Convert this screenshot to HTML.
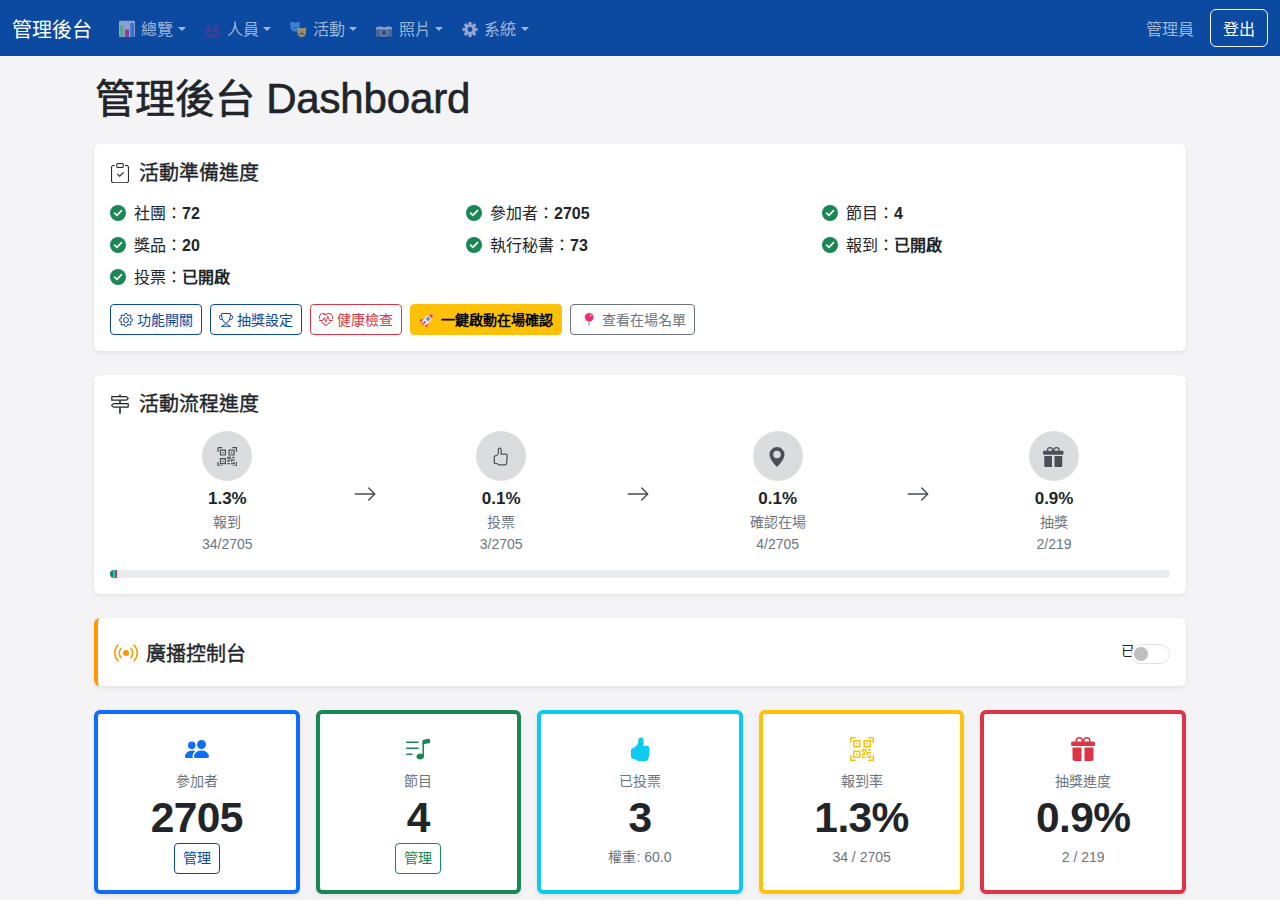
<!DOCTYPE html>
<html lang="zh-TW">
<head>
<meta charset="utf-8">
<title>管理後台 Dashboard</title>
<style>
*{box-sizing:border-box;margin:0;padding:0}
html,body{width:1280px;height:900px;overflow:hidden}
body{font-family:"Liberation Sans",sans-serif;font-size:16px;line-height:1.5;color:#212529;background:#f4f4f6;position:relative}
svg{display:block}
.abs{position:absolute}
/* navbar */
.nav{position:absolute;left:0;top:0;width:1280px;height:56px;background:#0b4aa0}
.brand{position:absolute;left:12px;top:14.5px;font-size:20px;line-height:30px;color:#fff;white-space:nowrap}
.ni{position:absolute;top:17.5px;height:24px;line-height:24px;color:rgba(255,255,255,.6);white-space:nowrap;font-size:16px}
.nt{position:absolute;top:17.5px;height:24px;line-height:24px;color:rgba(255,255,255,.6);white-space:nowrap;font-size:16px}
.caret{position:absolute;top:27px;width:0;height:0;border-top:4.5px solid rgba(255,255,255,.6);border-left:4.3px solid transparent;border-right:4.3px solid transparent}
.user{position:absolute;left:1146px;top:18px;line-height:24px;color:rgba(255,255,255,.6)}
.logout{position:absolute;left:1210px;top:9px;width:58px;height:38px;border:1px solid #f8f9fa;border-radius:6px;color:#fff;text-align:center;line-height:39px}
/* page */
h1{position:absolute;left:95px;top:74.5px;font-size:40px;line-height:48px;font-weight:500;white-space:nowrap;color:#212529;-webkit-text-stroke:0.6px #212529}
.card{position:absolute;left:94px;width:1092px;background:#fff;border-radius:6px;box-shadow:0 .125rem .25rem rgba(0,0,0,.075)}
.ttl{position:absolute;font-size:20px;line-height:27px;font-weight:500;white-space:nowrap;-webkit-text-stroke:0.35px #212529}
.chk{position:absolute;font-size:16px;line-height:24px;white-space:nowrap}
.chk b{font-weight:700}
.chk svg{position:absolute;left:0;top:4px}
.chk span{position:absolute;left:24px;top:0.8px}
.btn{position:absolute;top:160px;height:31px;border:1px solid;border-radius:4px;font-size:14px;line-height:31px;white-space:nowrap;padding:0 8px}
.btn svg{display:inline-block;vertical-align:-2px;margin-right:4px}
.rk{display:inline-block;width:17px;font-size:12.5px;text-align:left;margin-left:2px}

.step{position:absolute;top:56px;height:130px;text-align:center}
.circ{position:absolute;left:calc(50% - 25px);top:0;width:50px;height:50px;border-radius:50%;background:#dadcde}
.circ svg{position:absolute}
.pct{position:absolute;left:0;width:100%;top:55px;font-size:17px;line-height:26px;font-weight:700;color:#212529}
.lbl{position:absolute;left:0;width:100%;top:81px;font-size:14px;line-height:21px;color:#6c757d}
.cnt{position:absolute;left:0;width:100%;top:102.5px;font-size:14px;line-height:21px;color:#6c757d}
.arr{position:absolute;top:107px}
.prog{position:absolute;left:16px;top:195px;width:1060px;height:8px;border-radius:4px;background:#e9ecef;overflow:hidden}
.prog div{position:absolute;top:0;height:8px}

.sc{position:absolute;top:710px;width:205.6px;height:183.5px;background:#fff;border:4px solid;border-radius:6px;text-align:center;box-shadow:0 .125rem .25rem rgba(0,0,0,.075)}
.sc svg{position:absolute;left:86.8px;top:23px}
.sl{position:absolute;left:0;width:197.6px;top:57px;font-size:14px;line-height:21px;color:#6c757d}
.sn{position:absolute;left:0;width:197.6px;top:80px;font-size:42.5px;line-height:48px;font-weight:700;letter-spacing:-0.6px;color:#212529}
.sb{position:absolute;left:75.8px;top:129px;width:46px;height:31px;border:1px solid;border-radius:4px;font-size:14px;line-height:29px}
.ss{position:absolute;left:0;width:197.6px;top:133px;font-size:14px;line-height:21px;color:#6c757d}
.sw{position:absolute;left:1033px;top:26px;width:39px;height:19.5px;border:1px solid #dee2e6;border-radius:10px;background:#fff}
.sw i{position:absolute;left:2px;top:2px;width:13.5px;height:13.5px;border-radius:50%;background:#bfbfbf}
</style>
</head>
<body>
<div class="nav">
  <div class="brand">管理後台</div>
  <svg class="abs" style="left:119px;top:20px" width="16" height="17" viewBox="0 0 16 17"><rect x="0" y="0.8" width="16" height="16.2" rx="1.2" fill="#8ca0cf"/><rect x="1" y="5" width="3.8" height="12" rx="1.2" fill="#5fa690"/><rect x="6" y="9.6" width="4" height="7.4" rx="1.2" fill="#8a3f92"/><rect x="11.3" y="3" width="3.8" height="14" rx="1.2" fill="#2f78c8"/></svg>
  <div class="nt" style="left:141px">總覽</div><i class="caret" style="left:178px"></i>
  <svg class="abs" style="left:205px;top:25px" width="16" height="13" viewBox="0 0 16 13"><g fill="#3a3f98"><ellipse cx="3.7" cy="4" rx="3" ry="3.8"/><ellipse cx="11.3" cy="4" rx="3" ry="3.8"/><path d="M0 12.5V10.2C0 8.8 1.4 8 3.7 8s3.7.8 3.7 2.2v2.3zM7.6 12.5V10.2C7.6 8.8 9 8 11.3 8s3.7.8 3.7 2.2v2.3z"/></g></svg>
  <div class="nt" style="left:227px">人員</div><i class="caret" style="left:263px"></i>
  <svg class="abs" style="left:290px;top:21px" width="17" height="17" viewBox="0 0 17 17"><path d="M0.2 0.8Q5 2.2 9.8 0.8L9.5 6.5Q9 10.2 5 10.8Q1 10.2 0.5 6.5z" fill="#3a82d4"/><path d="M7.3 6.5Q12 8 16.2 6.2L15.9 12Q15.4 15.7 11.7 16.2Q7.8 15.7 7.5 12z" fill="#9a8f6a"/><path d="M9.6 13.2q2.1-1.6 4.2 0" stroke="#1e4f9a" stroke-width="1.1" fill="none"/><path d="M2.4 6q2.6 2 5.2 0" stroke="#1e5fb0" stroke-width="1.1" fill="none"/></svg>
  <div class="nt" style="left:313px">活動</div><i class="caret" style="left:349px"></i>
  <svg class="abs" style="left:376px;top:26px" width="16" height="11" viewBox="0 0 16 11"><rect x="0" y="1.2" width="16" height="9.6" fill="#4b6596"/><rect x="0" y="1.2" width="16" height="2" fill="#8ea4d2"/><rect x="3" y="0" width="2.4" height="1.4" fill="#6f88bd"/><rect x="11" y="0" width="2.4" height="1.4" fill="#6f88bd"/><circle cx="8" cy="6.4" r="3.4" fill="#34508f" stroke="#7d95c8" stroke-width="1.1"/></svg>
  <div class="nt" style="left:399px">照片</div><i class="caret" style="left:435px"></i>
  <svg class="abs" style="left:461.5px;top:22px" width="16" height="15" viewBox="0 0 16 15"><g transform="translate(8 7.5)"><g fill="#97a4d6"><rect x="-1.6" y="-7.5" width="3.2" height="15"/><rect x="-1.6" y="-7.5" width="3.2" height="15" transform="rotate(45)"/><rect x="-1.6" y="-7.5" width="3.2" height="15" transform="rotate(90)"/><rect x="-1.6" y="-7.5" width="3.2" height="15" transform="rotate(135)"/><circle r="5.3"/></g><circle r="2.4" fill="#0b4aa0"/></g></svg>
  <div class="nt" style="left:484px">系統</div><i class="caret" style="left:521px"></i>
  <div class="user">管理員</div>
  <div class="logout">登出</div>
</div>

<h1>管理後台 <span style="font-size:42px;letter-spacing:-0.15px">Dashboard</span></h1>

<!-- card 1 -->
<div class="card" style="top:144px;height:207px">

  <svg class="abs" style="left:17px;top:19px" width="18" height="20" viewBox="0 0 18 20"><path d="M3.8 2.55H2.2A1.6 1.6 0 0 0 .55 4.2V18A1.6 1.6 0 0 0 2.2 19.65H15.8A1.6 1.6 0 0 0 17.45 18V4.2A1.6 1.6 0 0 0 15.8 2.55H14" fill="none" stroke="#212529" stroke-width="1.05"/><rect x="5.8" y="0.5" width="6.4" height="3.9" rx="1" fill="none" stroke="#212529" stroke-width="1.05"/><path d="M6.2 10.9l2.5 2.3 4-3.9" fill="none" stroke="#212529" stroke-width="1.1"/></svg>
  <div class="ttl" style="left:45px;top:16px">活動準備進度</div>
<div class="chk" style="left:16px;top:57px"><svg width="16" height="16" viewBox="0 0 16 16"><circle cx="8" cy="8" r="8" fill="#198754"/><path d="M4.6 8.2l2.3 2.2 4.6-4.7" fill="none" stroke="#fff" stroke-width="1.7" stroke-linecap="round" stroke-linejoin="round"/></svg><span>社團：<b>72</b></span></div>
<div class="chk" style="left:372px;top:57px"><svg width="16" height="16" viewBox="0 0 16 16"><circle cx="8" cy="8" r="8" fill="#198754"/><path d="M4.6 8.2l2.3 2.2 4.6-4.7" fill="none" stroke="#fff" stroke-width="1.7" stroke-linecap="round" stroke-linejoin="round"/></svg><span>參加者：<b>2705</b></span></div>
<div class="chk" style="left:728px;top:57px"><svg width="16" height="16" viewBox="0 0 16 16"><circle cx="8" cy="8" r="8" fill="#198754"/><path d="M4.6 8.2l2.3 2.2 4.6-4.7" fill="none" stroke="#fff" stroke-width="1.7" stroke-linecap="round" stroke-linejoin="round"/></svg><span>節目：<b>4</b></span></div>
<div class="chk" style="left:16px;top:89px"><svg width="16" height="16" viewBox="0 0 16 16"><circle cx="8" cy="8" r="8" fill="#198754"/><path d="M4.6 8.2l2.3 2.2 4.6-4.7" fill="none" stroke="#fff" stroke-width="1.7" stroke-linecap="round" stroke-linejoin="round"/></svg><span>獎品：<b>20</b></span></div>
<div class="chk" style="left:372px;top:89px"><svg width="16" height="16" viewBox="0 0 16 16"><circle cx="8" cy="8" r="8" fill="#198754"/><path d="M4.6 8.2l2.3 2.2 4.6-4.7" fill="none" stroke="#fff" stroke-width="1.7" stroke-linecap="round" stroke-linejoin="round"/></svg><span>執行秘書：<b>73</b></span></div>
<div class="chk" style="left:728px;top:89px"><svg width="16" height="16" viewBox="0 0 16 16"><circle cx="8" cy="8" r="8" fill="#198754"/><path d="M4.6 8.2l2.3 2.2 4.6-4.7" fill="none" stroke="#fff" stroke-width="1.7" stroke-linecap="round" stroke-linejoin="round"/></svg><span>報到：<b>已開啟</b></span></div>
<div class="chk" style="left:16px;top:121px"><svg width="16" height="16" viewBox="0 0 16 16"><circle cx="8" cy="8" r="8" fill="#198754"/><path d="M4.6 8.2l2.3 2.2 4.6-4.7" fill="none" stroke="#fff" stroke-width="1.7" stroke-linecap="round" stroke-linejoin="round"/></svg><span>投票：<b>已開啟</b></span></div>
  <div class="btn" style="left:16px;color:#0d47a1;border-color:#0d47a1"><svg width="14" height="14" viewBox="0 0 16 16"><path d="M8 4.754a3.246 3.246 0 1 0 0 6.492 3.246 3.246 0 0 0 0-6.492M5.754 8a2.246 2.246 0 1 1 4.492 0 2.246 2.246 0 0 1-4.492 0" fill="currentColor"/><path d="M9.796 1.343c-.527-1.79-3.065-1.79-3.592 0l-.094.319a.873.873 0 0 1-1.255.52l-.292-.16c-1.64-.892-3.433.902-2.54 2.541l.159.292a.873.873 0 0 1-.52 1.255l-.319.094c-1.79.527-1.79 3.065 0 3.592l.319.094a.873.873 0 0 1 .52 1.255l-.16.292c-.892 1.64.901 3.434 2.541 2.54l.292-.159a.873.873 0 0 1 1.255.52l.094.319c.527 1.79 3.065 1.79 3.592 0l.094-.319a.873.873 0 0 1 1.255-.52l.292.16c1.64.893 3.434-.902 2.54-2.541l-.159-.292a.873.873 0 0 1 .52-1.255l.319-.094c1.79-.527 1.79-3.065 0-3.592l-.319-.094a.873.873 0 0 1-.52-1.255l.16-.292c.893-1.64-.902-3.433-2.541-2.54l-.292.159a.873.873 0 0 1-1.255-.52zm-2.633.283c.246-.835 1.428-.835 1.674 0l.094.319a1.873 1.873 0 0 0 2.693 1.115l.291-.16c.764-.415 1.6.42 1.184 1.185l-.159.292a1.873 1.873 0 0 0 1.116 2.692l.318.094c.835.246.835 1.428 0 1.674l-.319.094a1.873 1.873 0 0 0-1.115 2.693l.16.291c.415.764-.42 1.6-1.185 1.184l-.291-.159a1.873 1.873 0 0 0-2.693 1.116l-.094.318c-.246.835-1.428.835-1.674 0l-.094-.319a1.873 1.873 0 0 0-2.692-1.115l-.292.16c-.764.415-1.6-.42-1.184-1.185l.159-.291A1.873 1.873 0 0 0 1.945 8.93l-.319-.094c-.835-.246-.835-1.428 0-1.674l.319-.094A1.873 1.873 0 0 0 3.06 4.377l-.16-.292c-.415-.764.42-1.6 1.185-1.184l.292.159a1.873 1.873 0 0 0 2.692-1.115z" fill="currentColor"/></svg>功能開關</div>
  <div class="btn" style="left:116px;color:#0d47a1;border-color:#0d47a1"><svg width="14" height="14" viewBox="0 0 16 16"><path d="M2.5.5A.5.5 0 0 1 3 0h10a.5.5 0 0 1 .5.5q0 .807-.034 1.536a3 3 0 1 1-1.133 5.89c-.79 1.865-1.878 2.777-2.833 3.011v2.173l1.425.356c.194.048.377.135.537.255L13.3 15.1a.5.5 0 0 1-.3.9H3a.5.5 0 0 1-.3-.9l1.838-1.379c.16-.12.343-.207.537-.255L6.5 13.11v-2.173c-.955-.234-2.043-1.146-2.833-3.012a3 3 0 1 1-1.132-5.89A33 33 0 0 1 2.5.5m.099 2.54a2 2 0 0 0 .72 3.935c-.333-1.05-.588-2.346-.72-3.935m10.083 3.935a2 2 0 0 0 .72-3.935c-.133 1.59-.388 2.885-.72 3.935M3.504 1q.01.775.056 1.469c.13 2.028.457 3.546.87 4.667C5.294 9.48 6.484 10 7 10a.5.5 0 0 1 .5.5v2.61a1 1 0 0 1-.757.97l-1.426.356a.5.5 0 0 0-.179.085L4.5 15h7l-.638-.479a.5.5 0 0 0-.18-.085l-1.425-.356a1 1 0 0 1-.757-.97V10.5A.5.5 0 0 1 9 10c.516 0 1.706-.52 2.57-2.864.413-1.12.74-2.64.87-4.667q.045-.694.056-1.469z" fill="currentColor"/></svg>抽獎設定</div>
  <div class="btn" style="left:216px;color:#dc3545;border-color:#dc3545"><svg width="14" height="14" viewBox="0 0 16 16"><path fill-rule="evenodd" d="M8 2.748-.717-.737C5.6.281 2.514.878 1.4 3.053.918 3.995.78 5.323 1.508 7H.43c-2.128-5.697 4.165-8.83 7.394-5.857q.09.083.176.171a3 3 0 0 1 .176-.17c3.23-2.974 9.522.159 7.394 5.856h-1.078c.728-1.677.59-3.005.108-3.947C13.486.878 10.4.28 8.717 2.01zM2.212 10h1.315C4.593 11.183 6.05 12.458 8 13.795c1.949-1.337 3.407-2.612 4.473-3.795h1.315c-1.265 1.566-3.01 3.12-5.788 4.928C5.222 13.12 3.477 11.566 2.212 10" fill="currentColor"/><path d="M10.464 3.314a.5.5 0 0 0-.945.049L7.921 8.956 6.464 5.314a.5.5 0 0 0-.88-.091L3.732 8H.5a.5.5 0 0 0 0 1H4a.5.5 0 0 0 .416-.223l1.473-2.209 1.647 4.118a.5.5 0 0 0 .945-.049l1.598-5.593 1.457 3.642A.5.5 0 0 0 12 9h3.5a.5.5 0 0 0 0-1h-3.162z" fill="currentColor"/></svg>健康檢查</div>
  <div class="btn" style="left:316px;width:152px;background:#ffc107;border-color:#ffc107;color:#000;font-weight:700;padding-left:30px"><svg class="abs" style="left:7px;top:5.5px" width="18" height="18" viewBox="0 0 18 18"><g transform="rotate(45 9 9)"><path d="M7.6 14.5h2.8l-1.4 3.3z" fill="#f39a45"/><path d="M6.2 10.2L3.8 13.6 4.2 14.6h3zM11.8 10.2l2.4 3.4-.4 1h-3z" fill="#e8336b"/><path d="M9 1.2C11 2.8 12 5.6 12 8.6v5.4H6V8.6C6 5.6 7 2.8 9 1.2z" fill="#ede4f2"/><path d="M9 1.2C10.2 2.1 11 3.3 11.4 4.4H6.6C7 3.3 7.8 2.1 9 1.2z" fill="#e8335a"/><circle cx="9" cy="7.4" r="1.6" fill="#4aa3f0" stroke="#6b5fa8" stroke-width="0.6"/><rect x="8.2" y="11" width="1.6" height="3.6" fill="#e8336b"/></g></svg>一鍵啟動在場確認</div>
  <div class="btn" style="left:476px;width:125px;color:#6c757d;border-color:#6c757d;padding-left:31px"><svg class="abs" style="left:11px;top:5.5px" width="15" height="16" viewBox="0 0 15 16"><rect x="6.3" y="8.5" width="1.6" height="6.5" fill="#b9b3c9"/><circle cx="7.2" cy="6.3" r="4.3" fill="#ee2d6b"/><circle cx="8.6" cy="4.6" r="1" fill="#f7a1bf"/></svg>查看在場名單</div>
</div>

<!-- card 2 -->
<div class="card" style="top:375px;height:219px">

  <svg class="abs" style="left:16px;top:19px" width="20" height="20" viewBox="0 0 20 20"><path d="M10 0.5V2.4M10 6.4V9.4M10 13.3V19.7" stroke="#212529" stroke-width="1.6"/><path d="M1.8 2.6H16.4L18.3 4.4 16.4 6.2H1.8Z" fill="none" stroke="#212529" stroke-width="1.2" stroke-linejoin="round"/><path d="M18.2 9.6H3.5L1.5 11.35 3.5 13.1H18.2Z" fill="none" stroke="#212529" stroke-width="1.2" stroke-linejoin="round"/></svg>
  <div class="ttl" style="left:45px;top:16px">活動流程進度</div>
  <div class="step" style="left:16px;width:234.7px"><div class="circ"><svg style="left:14.2px;top:15.8px" width="20.5" height="19.7" viewBox="0 0 16 16"><path fill="#495057" d="M0 .5A.5.5 0 0 1 .5 0h3a.5.5 0 0 1 0 1H1v2.5a.5.5 0 0 1-1 0zm12 0a.5.5 0 0 1 .5-.5h3a.5.5 0 0 1 .5.5v3a.5.5 0 0 1-1 0V1h-2.5a.5.5 0 0 1-.5-.5M.5 12a.5.5 0 0 1 .5.5V15h2.5a.5.5 0 0 1 0 1h-3a.5.5 0 0 1-.5-.5v-3a.5.5 0 0 1 .5-.5m15 0a.5.5 0 0 1 .5.5v3a.5.5 0 0 1-.5.5h-3a.5.5 0 0 1 0-1H15v-2.5a.5.5 0 0 1 .5-.5M4 4h1v1H4z"/><path fill="#495057" d="M7 2H2v5h5zM3 3h3v3H3zm2 8H4v1h1z"/><path fill="#495057" d="M7 9H2v5h5zm-4 1h3v3H3zm8-6h1v1h-1z"/><path fill="#495057" d="M9 2h5v5H9zm1 1v3h3V3zM8 8v2h1v1H8v1h2v-2h1v2h1v-1h2v-1h-3V8zm2 2H9V9h1zm4 2h-1v1h-2v1h3zm-4 2v-1H8v1z"/><path fill="#495057" d="M12 9h2V8h-2z"/></svg></div><div class="pct">1.3%</div><div class="lbl">報到</div><div class="cnt">34/2705</div></div>
  <div class="arr" style="left:258.7px"><svg width="24" height="24" viewBox="0 0 16 16"><path fill="#495057" fill-rule="evenodd" d="M1 8a.5.5 0 0 1 .5-.5h11.793l-3.147-3.146a.5.5 0 0 1 .708-.708l4 4a.5.5 0 0 1 0 .708l-4 4a.5.5 0 0 1-.708-.708L13.293 8.5H1.5A.5.5 0 0 1 1 8"/></svg></div>
  <div class="step" style="left:290.7px;width:233.1px"><div class="circ"><svg style="left:17px;top:16px" width="16" height="20" viewBox="0 0 16 20"><path d="M6.2 1.3c.9-.5 1.9.2 1.9 1.2v4.6h4.6c.9 0 1.6.8 1.5 1.7l-.6 7.6c-.1.9-.8 1.5-1.7 1.5H6.6c-.8 0-1.3-.3-1.9-.8l-.7-.6H2.2c-.5 0-.9-.4-.9-.9V9.7c0-.5.4-.9.9-.9 1.6 0 3.2-1.4 3.2-3.5V2.4c0-.5.3-.9.8-1.1z" fill="none" stroke="#495057" stroke-width="1.2"/></svg></div><div class="pct">0.1%</div><div class="lbl">投票</div><div class="cnt">3/2705</div></div>
  <div class="arr" style="left:531.8px"><svg width="24" height="24" viewBox="0 0 16 16"><path fill="#495057" fill-rule="evenodd" d="M1 8a.5.5 0 0 1 .5-.5h11.793l-3.147-3.146a.5.5 0 0 1 .708-.708l4 4a.5.5 0 0 1 0 .708l-4 4a.5.5 0 0 1-.708-.708L13.293 8.5H1.5A.5.5 0 0 1 1 8"/></svg></div>
  <div class="step" style="left:563.8px;width:239.7px"><div class="circ"><svg style="left:14.7px;top:16px" width="20" height="20" viewBox="0 0 16 16"><path fill="#495057" d="M8 16s6-5.686 6-10A6 6 0 0 0 2 6c0 4.314 6 10 6 10m0-7a3 3 0 1 1 0-6 3 3 0 0 1 0 6"/></svg></div><div class="pct">0.1%</div><div class="lbl">確認在場</div><div class="cnt">4/2705</div></div>
  <div class="arr" style="left:811.5px"><svg width="24" height="24" viewBox="0 0 16 16"><path fill="#495057" fill-rule="evenodd" d="M1 8a.5.5 0 0 1 .5-.5h11.793l-3.147-3.146a.5.5 0 0 1 .708-.708l4 4a.5.5 0 0 1 0 .708l-4 4a.5.5 0 0 1-.708-.708L13.293 8.5H1.5A.5.5 0 0 1 1 8"/></svg></div>
  <div class="step" style="left:843.5px;width:233.1px"><div class="circ"><svg style="left:14.2px;top:15.8px" width="20.5" height="20.5" viewBox="0 0 16 16"><path fill="#495057" d="M3 2.5a2.5 2.5 0 0 1 5 0 2.5 2.5 0 0 1 5 0v.006c0 .07 0 .27-.038.494H15a1 1 0 0 1 1 1v1a1 1 0 0 1-1 1H1a1 1 0 0 1-1-1V4a1 1 0 0 1 1-1h2.038A3 3 0 0 1 3 2.506zm1.068.5H7v-.5a1.5 1.5 0 1 0-3 0c0 .085.002.274.045.43zM9 3h2.932l.023-.07c.043-.156.045-.345.045-.43a1.5 1.5 0 0 0-3 0zm6 4v7.5a1.5 1.5 0 0 1-1.5 1.5H9V7zM2.5 16A1.5 1.5 0 0 1 1 14.5V7h6v9z"/></svg></div><div class="pct">0.9%</div><div class="lbl">抽獎</div><div class="cnt">2/219</div></div>
  <div class="prog"><div style="left:0;width:3.3px;background:#198754"></div><div style="left:3.3px;width:1.3px;background:#0dcaf0"></div><div style="left:4.6px;width:2.3px;background:#dc3545"></div></div>
</div>

<!-- card 3 -->
<div class="card" style="top:618px;height:68px;border-left:4px solid #ff9800">

  <svg class="abs" style="left:16px;top:23px" width="24" height="24" viewBox="0 0 16 16"><path fill="#ff9800" d="M3.05 3.05a7 7 0 0 0 0 9.9.5.5 0 0 1-.707.707 8 8 0 0 1 0-11.314.5.5 0 0 1 .707.707m2.122 2.122a4 4 0 0 0 0 5.656.5.5 0 1 1-.708.708 5 5 0 0 1 0-7.072.5.5 0 0 1 .708.708m5.656-.708a.5.5 0 0 1 .708 0 5 5 0 0 1 0 7.072.5.5 0 1 1-.708-.708 4 4 0 0 0 0-5.656.5.5 0 0 1 0-.708m2.122-2.12a.5.5 0 0 1 .707 0 8 8 0 0 1 0 11.313.5.5 0 0 1-.707-.707 7 7 0 0 0 0-9.9.5.5 0 0 1 0-.707zM10 8a2 2 0 1 1-4 0 2 2 0 0 1 4 0"/></svg>
  <div class="ttl" style="left:48px;top:22.5px">廣播控制台</div>
  <div class="abs" style="left:1023px;top:23px;font-size:14px;line-height:21px;color:#212529">已</div>
  <div class="sw"><i></i></div>
</div>

<!-- stats -->
<div class="sc" style="left:94px;border-color:#0d6efd"><svg width="24" height="24" viewBox="0 0 16 16"><path fill="#0d6efd" d="M7 14s-1 0-1-1 1-4 5-4 5 3 5 4-1 1-1 1zm4-6a3 3 0 1 0 0-6 3 3 0 0 0 0 6m-5.784 6A2.24 2.24 0 0 1 5 13c0-1.355.68-2.75 1.936-3.72A6.3 6.3 0 0 0 5 9c-4 0-5 3-5 4s1 1 1 1zM4.5 8a2.5 2.5 0 1 0 0-5 2.5 2.5 0 0 0 0 5"/></svg><div class="sl">參加者</div><div class="sn">2705</div><div class="sb" style="color:#0d47a1;border-color:#0d47a1">管理</div></div>
<div class="sc" style="left:315.6px;border-color:#198754"><svg width="24" height="24" viewBox="0 0 16 16"><g fill="#198754"><path d="M12 13c0 1.105-1.12 2-2.5 2S7 14.105 7 13s1.12-2 2.5-2 2.5.895 2.5 2"/><path fill-rule="evenodd" d="M12 3v10h-1V3z"/><path d="M11 2.82a1 1 0 0 1 .804-.98l3-.6A1 1 0 0 1 16 2.22V4l-5 1z"/><path fill-rule="evenodd" d="M0 11.5a.5.5 0 0 1 .5-.5H4a.5.5 0 0 1 0 1H.5a.5.5 0 0 1-.5-.5m0-4A.5.5 0 0 1 .5 7H8a.5.5 0 0 1 0 1H.5a.5.5 0 0 1-.5-.5m0-4A.5.5 0 0 1 .5 3H8a.5.5 0 0 1 0 1H.5a.5.5 0 0 1-.5-.5"/></g></svg><div class="sl">節目</div><div class="sn">4</div><div class="sb" style="color:#198754;border-color:#198754">管理</div></div>
<div class="sc" style="left:537.2px;border-color:#0dcaf0"><svg width="24" height="24" viewBox="0 0 16 16"><path fill="#0dcaf0" d="M6.956 1.745C7.021.81 7.908.087 8.864.325l.261.066c.463.116.874.456 1.012.965.22.816.533 2.511.062 4.51a10 10 0 0 1 .443-.051c.713-.065 1.669-.072 2.516.21.518.173.994.681 1.2 1.273.184.532.16 1.162-.234 1.733q.086.18.138.363c.077.27.113.567.113.856s-.036.586-.113.856c-.039.135-.09.273-.16.404.169.387.107.819-.003 1.148a3.2 3.2 0 0 1-.488.901c.054.152.076.312.076.465 0 .305-.089.625-.253.912C13.1 15.522 12.437 16 11.5 16H8c-.605 0-1.070-.081-1.466-.218a4.8 4.8 0 0 1-.97-.484l-.048-.03c-.504-.307-.999-.609-2.068-.722C2.682 14.464 2 13.846 2 13V9c0-.85.685-1.432 1.357-1.615.849-.232 1.574-.787 2.132-1.41.56-.627.914-1.28 1.039-1.639.199-.575.356-1.539.428-2.59z"/></svg><div class="sl">已投票</div><div class="sn">3</div><div class="ss">權重: 60.0</div></div>
<div class="sc" style="left:758.8px;border-color:#ffc107"><svg width="24" height="24" viewBox="0 0 16 16"><g fill="#ffc107"><path d="M0 .5A.5.5 0 0 1 .5 0h3a.5.5 0 0 1 0 1H1v2.5a.5.5 0 0 1-1 0zm12 0a.5.5 0 0 1 .5-.5h3a.5.5 0 0 1 .5.5v3a.5.5 0 0 1-1 0V1h-2.5a.5.5 0 0 1-.5-.5M.5 12a.5.5 0 0 1 .5.5V15h2.5a.5.5 0 0 1 0 1h-3a.5.5 0 0 1-.5-.5v-3a.5.5 0 0 1 .5-.5m15 0a.5.5 0 0 1 .5.5v3a.5.5 0 0 1-.5.5h-3a.5.5 0 0 1 0-1H15v-2.5a.5.5 0 0 1 .5-.5M4 4h1v1H4z"/><path d="M7 2H2v5h5zM3 3h3v3H3zm2 8H4v1h1z"/><path d="M7 9H2v5h5zm-4 1h3v3H3zm8-6h1v1h-1z"/><path d="M9 2h5v5H9zm1 1v3h3V3zM8 8v2h1v1H8v1h2v-2h1v2h1v-1h2v-1h-3V8zm2 2H9V9h1zm4 2h-1v1h-2v1h3zm-4 2v-1H8v1z"/><path d="M12 9h2V8h-2z"/></g></svg><div class="sl">報到率</div><div class="sn">1.3%</div><div class="ss">34 / 2705</div></div>
<div class="sc" style="left:980.4px;border-color:#dc3545"><svg width="24" height="24" viewBox="0 0 16 16"><path fill="#dc3545" d="M3 2.5a2.5 2.5 0 0 1 5 0 2.5 2.5 0 0 1 5 0v.006c0 .07 0 .27-.038.494H15a1 1 0 0 1 1 1v1a1 1 0 0 1-1 1H1a1 1 0 0 1-1-1V4a1 1 0 0 1 1-1h2.038A3 3 0 0 1 3 2.506zm1.068.5H7v-.5a1.5 1.5 0 1 0-3 0c0 .085.002.274.045.43zM9 3h2.932l.023-.07c.043-.156.045-.345.045-.43a1.5 1.5 0 0 0-3 0zm6 4v7.5a1.5 1.5 0 0 1-1.5 1.5H9V7zM2.5 16A1.5 1.5 0 0 1 1 14.5V7h6v9z"/></svg><div class="sl">抽獎進度</div><div class="sn">0.9%</div><div class="ss">2 / 219</div></div>

</body>
</html>
